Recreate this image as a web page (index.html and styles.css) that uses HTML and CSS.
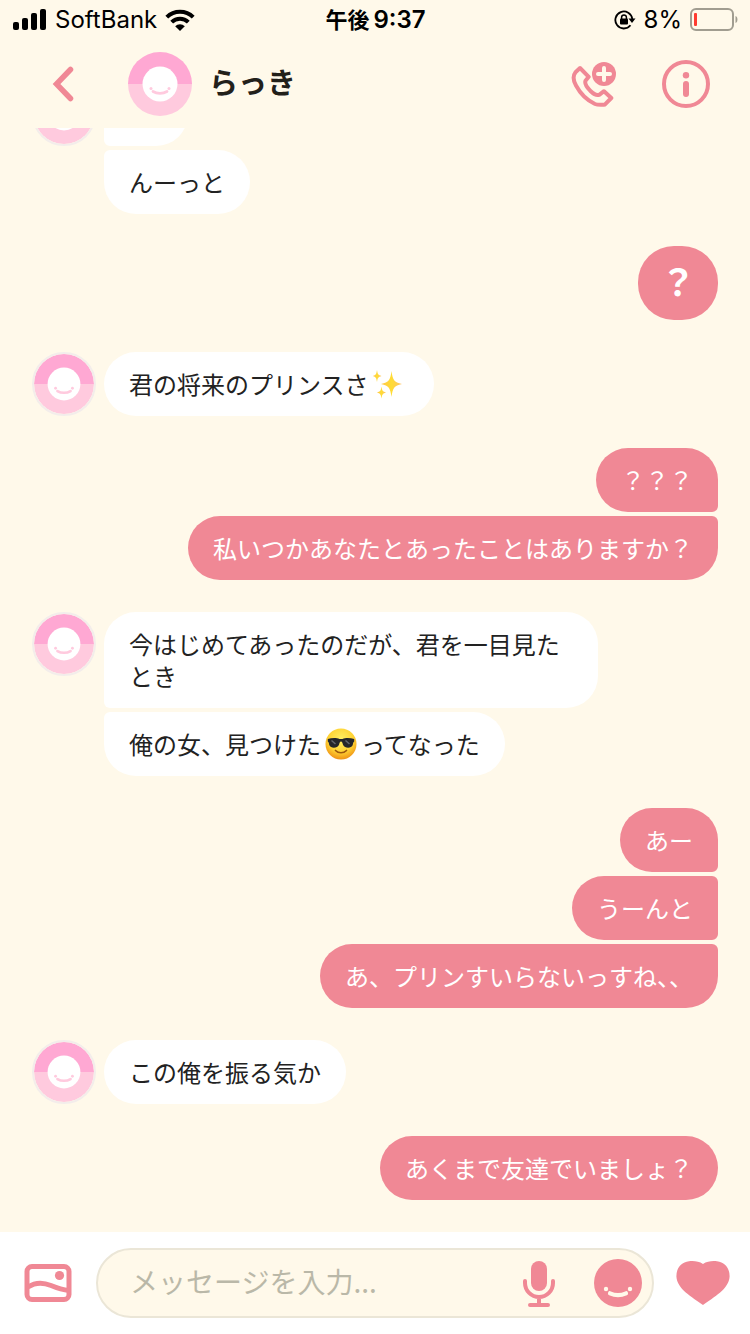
FILE: index.html
```
<!DOCTYPE html>
<html lang="ja">
<head>
<meta charset="utf-8">
<meta name="viewport" content="width=device-width, initial-scale=1">
<title>らっき</title>
<link rel="stylesheet" href="styles.css">
</head>
<body>
<svg class="defs" aria-hidden="true">
  <symbol id="face" viewBox="0 0 64 64">
    <path d="M0 32a32 32 0 0 1 64 0z" fill="#ffa8d3"/>
    <path d="M0 32a32 32 0 0 0 64 0z" fill="#ffcade"/>
    <circle cx="32" cy="32" r="17.500" fill="#fff"/>
    <path d="M25 39.500c4 2.400 10 2.400 14 0" fill="none" stroke="#ffcade" stroke-width="2.800" stroke-linecap="round"/>
    <circle cx="23" cy="36.500" r="1.500" fill="#ffcade"/>
    <circle cx="41" cy="36.500" r="1.500" fill="#ffcade"/>
  </symbol>
</svg>
<div class="app">
  <div class="status">
    <div class="status-side">
      <svg class="signal" viewBox="0 0 34 22" aria-hidden="true"><rect x="0" y="13" width="6" height="8" rx="2"/><rect x="9" y="9" width="6" height="12" rx="2"/><rect x="18" y="4" width="6" height="17" rx="2"/><rect x="27" y="0" width="6" height="21" rx="2"/></svg>
      <span class="carrier">SoftBank</span>
      <svg class="wifi" viewBox="0 0 30 22" aria-hidden="true"><g fill="none" stroke="#000" stroke-width="4"><path d="M1.800 8.200a18.800 18.800 0 0 1 26.400 0"/><path d="M6.700 13.200a11.800 11.800 0 0 1 16.600 0"/></g><path d="M15 22l-4.800-4.800a6.800 6.800 0 0 1 9.600 0z"/></svg>
    </div>
    <div class="clock"><span class="ampm">午後</span><span>9:37</span></div>
    <div class="status-side status-right">
      <svg class="lock" viewBox="0 0 22 20" aria-hidden="true"><path d="M18.300 9a8.500 8.500 0 1 0-1.800 6.300" fill="none" stroke="#000" stroke-width="1.800"/><path d="M14.500 8.500h7l-3.500 4.500z"/><rect x="6" y="8.500" width="8" height="6" rx="1"/><path d="M7.600 9V7.300a2.400 2.400 0 0 1 4.800 0V9" fill="none" stroke="#000" stroke-width="1.500"/></svg>
      <span class="percent">8%</span>
      <svg class="battery" viewBox="0 0 48 24" aria-hidden="true"><rect x="1" y="1" width="42" height="21" rx="5" fill="none" stroke="#a19d90" stroke-width="2"/><rect x="4" y="5" width="3" height="13" rx="1" fill="#ff3b30"/><path d="M45.500 8c2.600.8 2.600 6.200 0 7z" fill="#a19d90"/></svg>
    </div>
  </div>

  <header class="header">
    <button class="icon-button back" aria-label="戻る"><svg width="24" height="36" viewBox="0 0 24 36"><path d="M18.500 3.500L4.500 18l14 14.500" fill="none" stroke="#f08895" stroke-width="5.500" stroke-linecap="round" stroke-linejoin="miter"/></svg></button>
    <svg class="header-avatar" aria-hidden="true"><use href="#face"/></svg>
    <h1 class="name">らっき</h1>
    <button class="icon-button call" aria-label="通話"><svg width="48" height="48" viewBox="0 0 48 48"><path d="M10 8L5.500 12.200C2.500 16 3.800 21.500 6 25.500 10 33 17.500 40.500 25 44c3 1.200 7 .8 9.800.6L41.300 38 34 31.200 29.500 34.700c-3.500 1.500-6.500-1.200-9-3.700-2.500-2.600-6.500-6.500-5-10.300l3.200-3.900z" fill="none" stroke="#f08895" stroke-width="4" stroke-linejoin="round"/><circle cx="34" cy="14" r="12" fill="#f08895"/><path d="M34 8v12M28 14h12" stroke="#fff9ea" stroke-width="4" stroke-linecap="round"/></svg></button>
    <button class="icon-button" aria-label="情報"><svg width="48" height="48" viewBox="0 0 48 48"><circle cx="24" cy="24" r="22" fill="none" stroke="#f08895" stroke-width="4"/><circle cx="24" cy="15.200" r="3.200" fill="#f08895"/><path d="M24 24v10" stroke="#f08895" stroke-width="6" stroke-linecap="round"/></svg></button>
  </header>

  <main class="chat">
    <div class="messages">
      <section class="turn received">
        <svg class="avatar" aria-hidden="true"><use href="#face"/></svg>
        <div class="stack"><p class="bubble short"></p><p class="bubble">んーっと</p></div>
      </section>
      <section class="turn sent"><div class="stack"><p class="bubble large">？</p></div></section>
      <section class="turn received">
        <svg class="avatar" aria-hidden="true"><use href="#face"/></svg>
        <div class="stack"><p class="bubble">君の将来のプリンスさ<svg class="emoji" viewBox="0 0 32 32" role="img" aria-label="きらきら"><defs><linearGradient id="gold" x2="1"><stop stop-color="#ffc64b"/><stop offset=".5" stop-color="#ffdc35"/><stop offset="1" stop-color="#ffc36a"/></linearGradient></defs><g fill="url(#gold)"><path d="M18.500 3c1.200 9 2.500 11.300 10.500 13-8 1.700-9.300 4-10.500 13-1.200-9-2.500-11.300-10.500-13 8-1.700 9.300-4 10.500-13z"/><path d="M4 2c.6 4 1.200 5 4.500 6-3.300 1-3.900 2-4.500 6-.6-4-1.200-5-4-6 2.800-1 3.400-2 4-6z"/><path d="M8.500 18.500c.6 4 1.200 5 4.500 6-3.300 1-3.900 2-4.500 6-.6-4-1.200-5-4.500-6 3.300-1 3.900-2 4.500-6z"/></g></svg></p></div>
      </section>
      <section class="turn sent"><div class="stack"><p class="bubble">？？？</p><p class="bubble">私いつかあなたとあったことはありますか？</p></div></section>
      <section class="turn received">
        <svg class="avatar" aria-hidden="true"><use href="#face"/></svg>
        <div class="stack"><p class="bubble">今はじめてあったのだが、君を一目見たとき</p><p class="bubble">俺の女、見つけた<svg class="emoji" viewBox="0 0 32 32" role="img" aria-label="サングラスの顔"><defs><radialGradient id="skin" cy=".35" r=".68"><stop stop-color="#fff064"/><stop offset=".6" stop-color="#ffd334"/><stop offset="1" stop-color="#ed8a12"/></radialGradient></defs><circle cx="16" cy="16" r="15.500" fill="url(#skin)"/><path d="M2.800 11c4-1.300 8.700-1.500 11.700 0h3c3-1.500 7.700-1.300 11.700 0v2.500c-1.300.8-1 2.200-1.600 3.800-1 3.300-8.200 3.400-9.600-.5-.5-1.500-.8-3.200-2-3.200s-1.500 1.700-2 3.200c-1.400 3.900-8.600 3.800-9.600.5-.6-1.600-.3-3-1.600-3.800z" fill="#25262a"/><path d="M6.500 12.500l4 3.500M20.500 12.500l4 3.500" stroke="#62666e" stroke-width="1.500"/><path d="M10.500 22.500c3 3 8 3 11 0" fill="none" stroke="#9c570d" stroke-width="1.700" stroke-linecap="round"/></svg>ってなった</p></div>
      </section>
      <section class="turn sent"><div class="stack"><p class="bubble">あー</p><p class="bubble">うーんと</p><p class="bubble">あ、プリンすいらないっすね、、</p></div></section>
      <section class="turn received">
        <svg class="avatar" aria-hidden="true"><use href="#face"/></svg>
        <div class="stack"><p class="bubble">この俺を振る気か</p></div>
      </section>
      <section class="turn sent"><div class="stack"><p class="bubble">あくまで友達でいましょ？</p></div></section>
    </div>
  </main>

  <footer class="composer">
    <button class="icon-button" aria-label="画像"><svg width="48" height="40" viewBox="0 0 48 40"><rect x="3" y="3.500" width="42" height="33" rx="5" fill="none" stroke="#f08895" stroke-width="5"/><path d="M4 24c9-6 17-4 23-1.500 7 3 12 4.500 18 5" fill="none" stroke="#f08895" stroke-width="5"/><circle cx="35.500" cy="12.500" r="4.600" fill="#f08895"/></svg></button>
    <div class="field">
      <input class="message-input" type="text" aria-label="メッセージ" placeholder="メッセージを入力...">
      <button class="icon-button" aria-label="音声"><svg width="34" height="48" viewBox="0 0 34 48"><rect x="9" y="2" width="16" height="30" rx="8" fill="#f08895"/><path d="M3 22v2a14 14 0 0 0 28 0v-2M17 38v8M8 46h18" fill="none" stroke="#f08895" stroke-width="4" stroke-linecap="round"/></svg></button>
      <button class="icon-button" aria-label="スタンプ"><svg width="48" height="48" viewBox="0 0 48 48"><circle cx="24" cy="24" r="24" fill="#f08895"/><path d="M16 34.300c5 2.200 11 2.200 16 0" fill="none" stroke="#fff9ea" stroke-width="4.200" stroke-linecap="round"/><circle cx="12" cy="30" r="2.200" fill="#fff9ea"/><circle cx="36" cy="30" r="2.200" fill="#fff9ea"/></svg></button>
    </div>
    <button class="icon-button" aria-label="ハート"><svg width="54" height="46" viewBox="0 0 54 46"><path d="M27 4C31 1.200 36 .7 41 1.200 49 2.200 53.700 8 53.600 16.500 53 29 38 37 27 45 16 37 1 29 .4 16.500.3 8 5 2.200 13 1.200 18 .7 23 1.200 27 4z" fill="#f08895"/></svg></button>
  </footer>
</div>
</body>
</html>
```

FILE: styles.css
```
:root {
  --cream: #fff9ea;
  --pink: #f08895;
}

* {
  box-sizing: border-box;
}

body {
  margin: 0;
  background: var(--cream);
  color: #222;
  font-family: "Noto Sans CJK JP", sans-serif;
}

.defs {
  position: absolute;
  width: 0;
  height: 0;
}

.app {
  display: flex;
  flex-direction: column;
  height: 100vh;
}

.status {
  display: grid;
  grid-template-columns: 1fr auto 1fr;
  align-items: center;
  height: 40px;
  padding: 0 12px 0 13px;
  color: #000;
  font-family: Inter, "Noto Sans CJK JP", sans-serif;
  font-size: 24px;
  line-height: 40px;
}

.status-side {
  display: flex;
  align-items: center;
  gap: 8px;
}

.status-right {
  justify-content: flex-end;
}

.signal {
  width: 34px;
  height: 22px;
}

.wifi {
  width: 30px;
  height: 22px;
}

.lock {
  width: 22px;
  height: 20px;
}

.battery {
  width: 48px;
  height: 24px;
}

.clock {
  display: flex;
  gap: 4px;
  font-weight: 600;
}

.ampm {
  font-size: 22px;
  font-weight: 700;
}

.header {
  display: flex;
  align-items: center;
  height: 88px;
  padding: 0 40px 0 48px;
}

.icon-button {
  display: flex;
  flex: none;
  align-items: center;
  justify-content: center;
  padding: 0;
  border: 0;
  background: none;
  cursor: pointer;
}

.back {
  margin-right: 52px;
  padding-left: 4px;
}

.header-avatar {
  width: 64px;
  height: 64px;
}

.name {
  flex: 1;
  margin: 0 0 0 17px;
  padding-bottom: 6px;
  color: #22201a;
  font-size: 29px;
  font-weight: 700;
  line-height: 40px;
}

.call {
  margin-right: 44px;
}

.chat {
  display: flex;
  flex: 1;
  flex-direction: column-reverse;
  min-height: 0;
  overflow-y: auto;
  scrollbar-width: none;
}

.messages {
  display: flex;
  flex: none;
  flex-direction: column;
  gap: 32px;
  padding: 32px;
}

.turn {
  display: flex;
  gap: 8px;
}

.sent {
  justify-content: flex-end;
}

.avatar {
  flex: none;
  width: 64px;
  height: 64px;
  border: 2px solid #f3edeb;
  border-radius: 50%;
}

.stack {
  display: flex;
  flex-direction: column;
  align-items: flex-start;
  gap: 4px;
  max-width: 494px;
}

.sent .stack {
  align-items: flex-end;
  max-width: 540px;
}

.bubble {
  min-height: 64px;
  margin: 0;
  padding: 16px 25px;
  border-radius: 32px;
  background: #fff;
  font-size: 24px;
  line-height: 32px;
}

.sent .bubble {
  background: var(--pink);
  color: #fff;
}

.received .bubble:not(:last-child) {
  border-bottom-left-radius: 6px;
}

.received .bubble:not(:first-child) {
  border-top-left-radius: 6px;
}

.sent .bubble:not(:last-child) {
  border-bottom-right-radius: 6px;
}

.sent .bubble:not(:first-child) {
  border-top-right-radius: 6px;
}

.short {
  width: 84px;
}

.sent .large {
  padding: 13px 22px 19px;
  border-radius: 36px;
  font-size: 36px;
  font-weight: 700;
  line-height: 42px;
}

.emoji {
  width: 32px;
  height: 32px;
  margin: 0 4px;
  vertical-align: top;
}

.composer {
  display: flex;
  flex: none;
  align-items: center;
  gap: 22px;
  padding: 16px 20px 16px 24px;
  background: #fff;
}

.field {
  display: flex;
  flex: 1;
  align-items: center;
  gap: 38px;
  min-width: 0;
  height: 70px;
  margin-left: 2px;
  padding: 0 10px 0 32px;
  border: 2px solid #ebe6d7;
  border-radius: 35px;
  background: var(--cream);
}

.message-input {
  flex: 1;
  min-width: 0;
  padding: 0 0 4px;
  border: 0;
  outline: 0;
  background: transparent;
  color: #222;
  font-family: inherit;
  font-size: 28px;
  line-height: 40px;
}

.message-input::placeholder {
  color: #bab8a8;
  opacity: 1;
}
```
